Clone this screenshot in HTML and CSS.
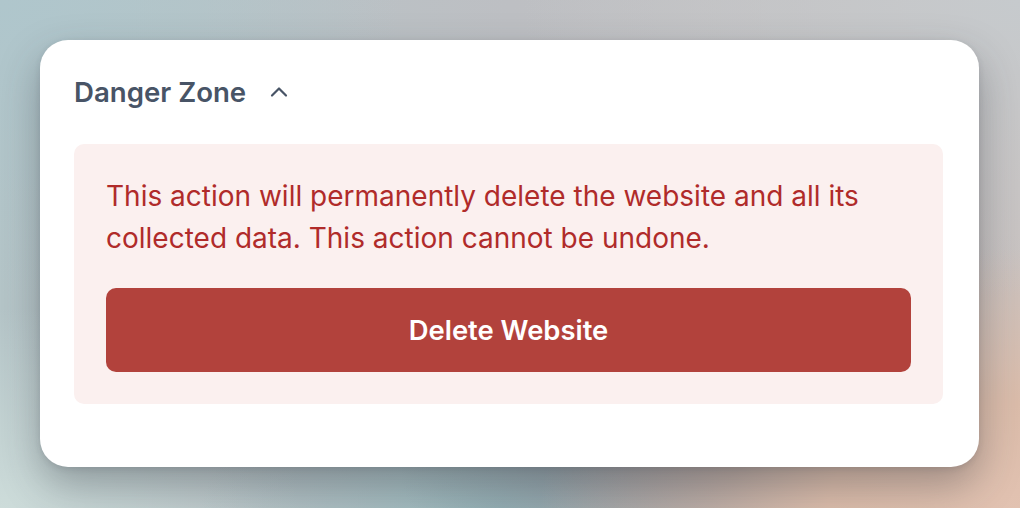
FILE: index.html
```html
<!DOCTYPE html>
<html lang="en">
<head>
<meta charset="utf-8">
<title>Danger Zone</title>
<link rel="stylesheet" href="styles.css">
</head>
<body>
<main class="stage">
  <section class="card">
    <header class="card-header">
      <h2 class="card-title">Danger Zone</h2>
      <svg class="chevron" width="24" height="24" viewBox="0 0 24 24" fill="none" stroke="currentColor" stroke-width="2.2" stroke-linecap="round" stroke-linejoin="round"><path d="M5 15.5 L12 8.5 L19 15.5"/></svg>
    </header>
    <div class="danger-box">
      <p class="danger-text">This action will permanently delete the website and all its collected data. This action cannot be undone.</p>
      <button class="danger-btn" type="button">Delete Website</button>
    </div>
  </section>
</main>
</body>
</html>
```
FILE: styles.css
```css
html, body {
  margin: 0;
  height: 100%;
}
body {
  font-family: Inter, "Noto Sans", sans-serif;
  background-color: #b9c4c6;
  background-image:
    radial-gradient(ellipse 480px 260px at 1020px 508px, #e2c2b1 0%, #dbbcaa 40%, rgba(219,188,170,0) 100%),
    radial-gradient(ellipse 340px 150px at 740px 470px, #858a94 0%, rgba(133,138,148,0) 100%),
    radial-gradient(ellipse 300px 120px at 500px 508px, #97b8bc 0%, rgba(151,184,188,0) 100%),
    radial-gradient(ellipse 300px 200px at 0px 508px, #cddcda 0%, rgba(205,220,218,0) 100%),
    radial-gradient(ellipse 400px 300px at 0px 0px, #afc6cc 0%, rgba(175,198,204,0) 100%),
    radial-gradient(ellipse 500px 300px at 1020px 0px, #c6cacd 0%, rgba(198,202,205,0) 100%),
    linear-gradient(90deg, #b5c5c8 0%, #bdbfc3 50%, #c9c2c0 100%);
}
.stage {
  padding: 40px 41px 41px 40px;
  box-sizing: border-box;
}
.card {
  background: #ffffff;
  border-radius: 28px;
  padding: 32px 36px 63px 34px;
  box-shadow: 0 18px 40px rgba(40, 45, 55, 0.35), 0 2px 6px rgba(40, 45, 55, 0.12);
}
.card-header {
  display: flex;
  align-items: center;
  gap: 21px;
  height: 40px;
  margin-bottom: 32px;
}
.card-title {
  margin: 0;
  font-size: 27.6px;
  font-weight: 600;
  line-height: 40px;
  color: #485466;
}
.chevron {
  color: #485466;
  margin-top: -1px;
}
.danger-box {
  background: #fbf0ef;
  border-radius: 10px;
  padding: 31px 32px 32px 32px;
}
.danger-text {
  margin: 0 0 29px 0;
  font-size: 28px;
  line-height: 42px;
  color: #b02b2a;
}
.danger-btn {
  display: block;
  width: 100%;
  height: 84px;
  border: 0;
  border-radius: 10px;
  background: #b2423c;
  color: #ffffff;
  font-family: Inter, "Noto Sans", sans-serif;
  font-size: 27.4px;
  font-weight: 600;
  cursor: pointer;
}
```
